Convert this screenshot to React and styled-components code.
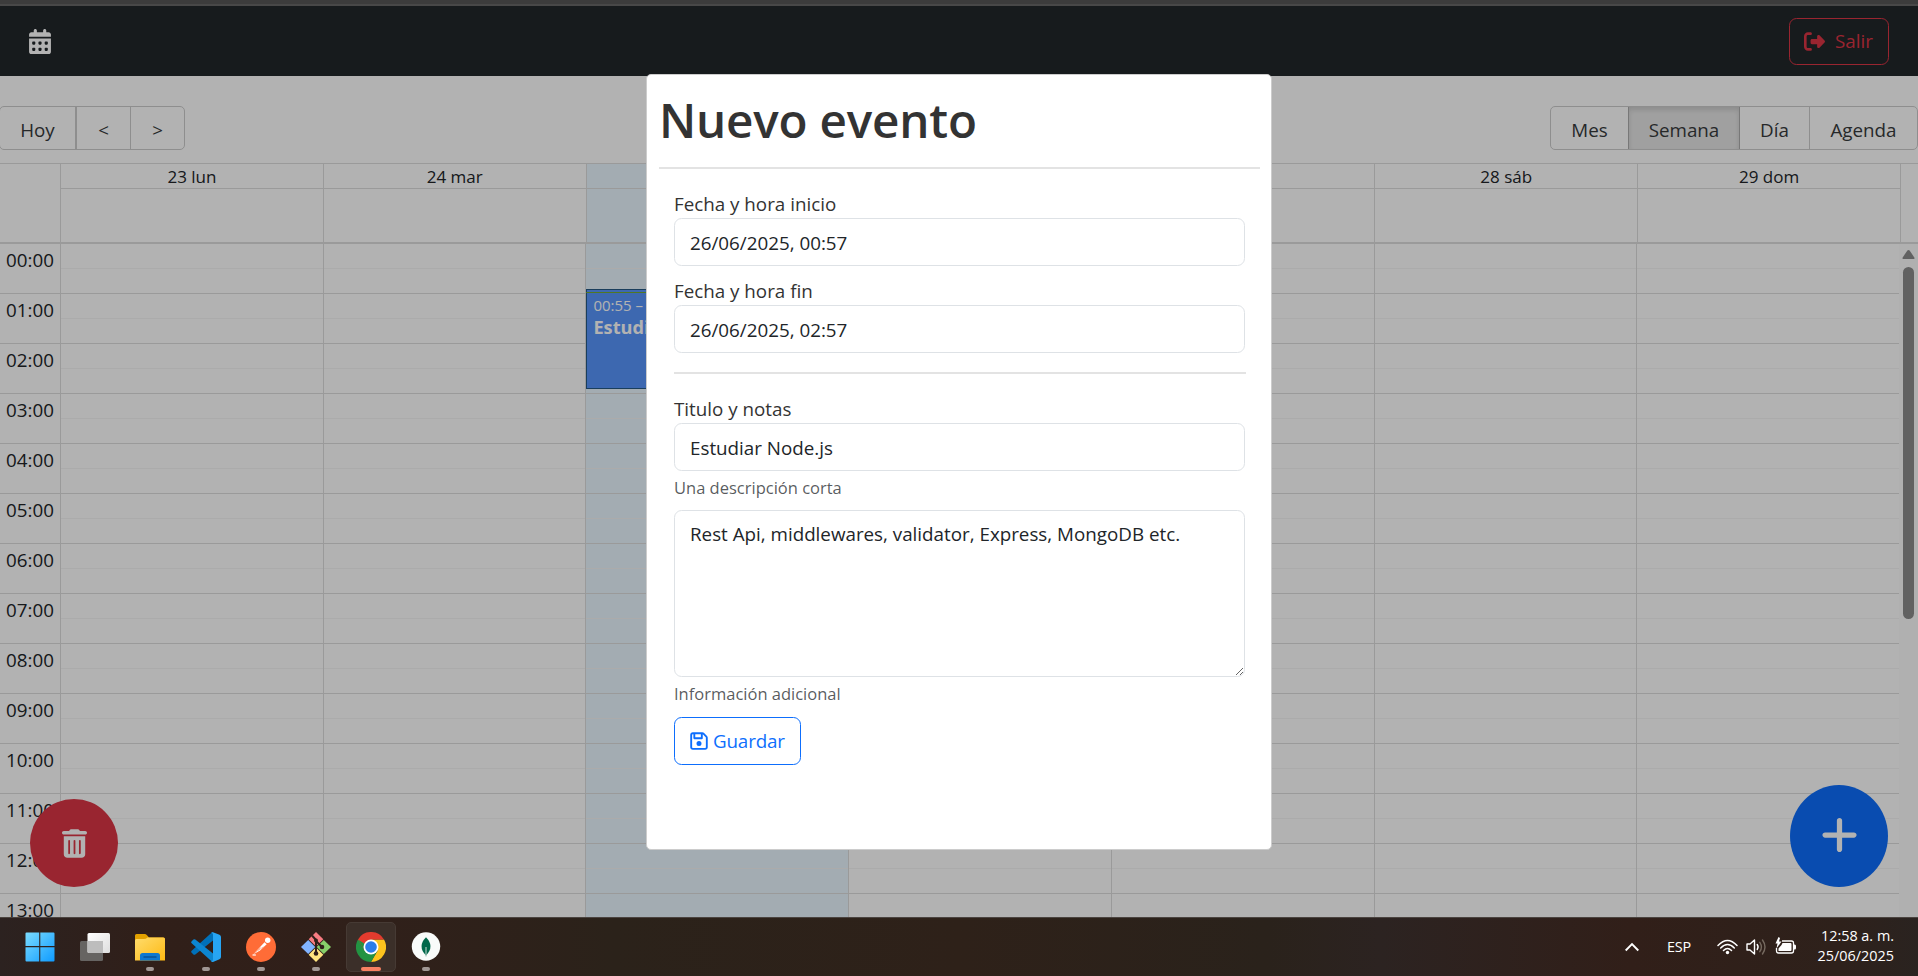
import React from 'react';
import styled, { createGlobalStyle, css } from 'styled-components';
import { FaCalendarDays, FaRightFromBracket, FaRegFloppyDisk, FaTrashCan, FaPlus } from 'react-icons/fa6';

const Global = createGlobalStyle`
  *, *::before, *::after { box-sizing: border-box; }
  html, body { margin: 0; padding: 0; overflow: hidden; }
  body {
    font-family: "Segoe UI", "Open Sans", "Noto Sans", sans-serif;
    font-size: 18.8px;
    line-height: 30px;
    color: #212529;
    background: #fff;
  }
  button, input, textarea { font: inherit; color: inherit; margin: 0; }
  h1 { margin: 0; }
`;

const Screen = styled.div`
  display: flex;
  flex-direction: column;
  width: 1918px;
  height: 976px;
  overflow: hidden;
`;

const BrowserEdge = styled.div`
  flex: none;
  height: 6px;
  background: #3c3c3c;
  border-bottom: 2px solid #484848;
`;

const Viewport = styled.div`
  position: relative;
  flex: none;
  height: 911px;
  overflow: hidden;
  display: flex;
  flex-direction: column;
  background: #fff;
`;

const Navbar = styled.nav`
  flex: none;
  display: flex;
  align-items: center;
  justify-content: space-between;
  height: 70px;
  padding: 0 29px;
  background: #21272a;
`;

const Brand = styled.span`
  display: flex;
  color: #fff;
  svg { width: 22px; height: 25px; }
`;

const LogoutButton = styled.button`
  display: flex;
  align-items: center;
  gap: 10px;
  width: 100px;
  height: 47px;
  padding: 0 0 0 14px;
  border: 1px solid #dc3545;
  border-radius: 7.5px;
  background: none;
  color: #dc3545;
  svg { width: 21px; height: 21px; }
`;

const Toolbar = styled.div`
  flex: none;
  display: flex;
  justify-content: space-between;
  padding: 30px 0 13px;
`;

const ButtonGroup = styled.div`
  display: flex;
  height: 44px;
  border: 1px solid #ccc;
  border-radius: 5px;
  overflow: hidden;
  margin-left: ${(p) => (p.$bleed ? -1 : 0)}px;
`;

const ToolButton = styled.button`
  width: ${(p) => p.$w}px;
  padding: 4px 0 0;
  border: 0;
  border-left: ${(p) => (p.$rule ? `${p.$rule}px solid #ccc` : '0')};
  background: none;
  color: #373a3c;
  line-height: 30px;
  ${(p) =>
    p.$active &&
    css`
      background: #e6e6e6;
      border: 1px solid #adadad;
      box-shadow: inset 0 3px 5px rgba(0, 0, 0, 0.125);
      padding-top: 3px;
      margin: -1px 0;
    `}
`;

const Calendar = styled.div`
  flex: 1;
  min-height: 0;
  display: flex;
  flex-direction: column;
  border-top: 1px solid #ddd;
`;

const HeaderRow = styled.div`
  flex: none;
  display: grid;
  grid-template-columns: 60px 1fr 17px;
  height: 80px;
  border-bottom: 2px solid #ddd;
`;

const HeaderDays = styled.div`
  display: grid;
  grid-template-columns: repeat(7, 1fr);
  border-right: 1px solid #ddd;
`;

const HeaderDay = styled.div`
  border-left: 1px solid #ddd;
  background: ${(p) => (p.$today ? '#eaf6ff' : 'transparent')};
  display: flex;
  flex-direction: column;
`;

const DayName = styled.div`
  height: 25px;
  border-bottom: 1px solid #ddd;
  text-align: center;
  font-size: 17px;
  line-height: 26px;
`;

const TimeGrid = styled.div`
  flex: 1;
  min-height: 0;
  display: grid;
  grid-template-columns: 60px 1fr 19px;
  overflow: hidden;
`;

const Gutter = styled.div`
  display: flex;
  flex-direction: column;
`;

const HourLabel = styled.div`
  flex: none;
  height: 50px;
  border-bottom: 1px solid #ddd;
  padding: 1px 6px 0 0;
  text-align: right;
`;

const Days = styled.div`
  display: grid;
  grid-template-columns: repeat(7, 1fr);
  min-width: 0;
`;

const DayColumn = styled.div`
  position: relative;
  border-left: 1px solid #ddd;
  background: ${(p) => (p.$today ? '#eaf6ff' : 'transparent')};
`;

const HourSlot = styled.div`
  height: 50px;
  border-bottom: 1px solid #ddd;
  &::before {
    content: '';
    display: block;
    height: 25px;
    border-bottom: 1px solid #f5f5f5;
  }
`;

const EventBlock = styled.div`
  position: absolute;
  top: 45px;
  left: 0;
  width: 236px;
  height: 100px;
  padding: 3px 6px;
  border: 1px solid #265985;
  background: #5895fc;
  color: #fff;
  white-space: nowrap;
`;

const EventTime = styled.div`
  font-size: 15px;
  line-height: 24px;
`;

const EventTitle = styled.strong`
  display: block;
  font-size: 18.2px;
  line-height: 21px;
`;

const NowLine = styled.div`
  position: absolute;
  top: 48px;
  left: 0;
  right: 0;
  height: 1px;
  background: #74ad31;
`;

const Scrollbar = styled.div`
  display: flex;
  flex-direction: column;
  align-items: center;
  padding: 6px 0 7px;
  background: #fcfcfc;
  color: #8b8b8b;
`;

const Thumb = styled.div`
  width: 11px;
  height: 352px;
  margin: 8px 0 auto;
  border-radius: 6px;
  background: #8b8b8b;
`;

const FloatingButton = styled.button`
  position: absolute;
  bottom: 30px;
  display: flex;
  align-items: center;
  justify-content: center;
  padding: 0;
  border: 0;
  border-radius: 50%;
  color: #fff;
`;

const DeleteButton = styled(FloatingButton)`
  left: 30px;
  width: 88px;
  height: 88px;
  background: #dc3545;
  svg { width: 25px; height: 29px; }
`;

const AddButton = styled(FloatingButton)`
  right: 30px;
  width: 98px;
  height: 102px;
  padding-bottom: 3px;
  background: #0d6efd;
  svg { width: 37px; height: 42px; }
`;

const Overlay = styled.div`
  position: absolute;
  inset: 0;
  background: rgba(0, 0, 0, 0.3);
`;

const Modal = styled.section`
  position: absolute;
  top: 68px;
  left: 646px;
  width: 626px;
  height: 776px;
  padding: 12px 11px 12px 12px;
  border: 1px solid #ccc;
  border-radius: 5px;
  background: #fff;
  color: #333;
`;

const Heading = styled.h1`
  height: 80px;
  font-size: 47.6px;
  line-height: 65px;
  font-weight: 600;
  letter-spacing: -0.2px;
`;

const Divider = styled.hr`
  height: 2px;
  margin: 0;
  border: 0;
  background: #e3e3e3;
`;

const Form = styled.form`
  display: flex;
  flex-direction: column;
  align-items: stretch;
  padding: 19px 14px 0 15px;
`;

const Field = styled.div`
  display: flex;
  flex-direction: column;
  padding-top: ${(p) => p.$before || 0}px;
  margin-bottom: ${(p) => p.$gap}px;
`;

const Label = styled.label`
  height: 30px;
  line-height: 32px;
`;

const control = css`
  display: block;
  width: 571px;
  border: 1px solid #dee2e6;
  border-radius: 7.5px;
  background: #fff;
  color: #212529;
  outline: 0;
`;

const Input = styled.input`
  ${control}
  height: 48px;
  padding: 1px 15px 0;
`;

const TextArea = styled.textarea`
  ${control}
  height: 167px;
  padding: 8px 15px;
  resize: vertical;
`;

const Hint = styled.small`
  margin-top: 3px;
  height: 27px;
  font-size: 16.5px;
  line-height: 27px;
  color: rgba(33, 37, 41, 0.75);
`;

const SaveButton = styled.button`
  display: flex;
  align-items: center;
  gap: 5px;
  width: 127px;
  height: 48px;
  padding: 0 0 0 15px;
  border: 1px solid #0d6efd;
  border-radius: 7.5px;
  background: none;
  color: #0d6efd;
  letter-spacing: -0.15px;
  svg { width: 18px; height: 20px; }
`;

const Taskbar = styled.footer`
  flex: none;
  display: flex;
  justify-content: space-between;
  height: 59px;
  padding: 0 24px 0 14px;
  border-top: 1px solid #4b4440;
  background: linear-gradient(90deg, #2c2220 0%, #301f19 8%, #30201a 20%, #2b221a 32%, #2e2119 50%, #2a221b 66%, #2c2321 72%, #311f19 85%, #2e211b 96%, #2a2320 100%);
  color: #fff;
`;

const Apps = styled.div`
  display: flex;
  gap: 5.2px;
  padding: 4px 0 0 1px;
`;

const AppTile = styled.div`
  display: flex;
  flex-direction: column;
  align-items: center;
  width: 50px;
  height: 50px;
  padding-top: 9px;
  border-radius: 5px;
  border: 1px solid ${(p) => (p.$active ? '#463a34' : 'transparent')};
  background: ${(p) => (p.$active ? '#3b2f29' : 'none')};
  svg { display: block; flex: none; }
`;

const RunMark = styled.i`
  width: ${(p) => (p.$active ? 20 : 8)}px;
  height: 4px;
  margin-top: 5px;
  border-radius: 2px;
  background: ${(p) => (p.$active ? '#f88162' : '#a09794')};
`;

const Tray = styled.div`
  display: flex;
  align-items: center;
  line-height: 20px;
`;

const Language = styled.span`
  margin: 0 23px 0 28px;
  width: 27px;
  font-size: 14.4px;
  letter-spacing: -0.2px;
`;

const TrayIcons = styled.div`
  display: flex;
  gap: 8px;
  flex: 0 0 84px;
`;

const Clock = styled.div`
  width: 93px;
  margin-top: -3px;
  text-align: right;
  font-size: 14.4px;
  white-space: nowrap;
`;

const WindowsIcon = () => (
  <svg width="30" height="30" viewBox="0 0 30 30">
    <defs>
      <linearGradient id="win" x1="0" y1="0" x2="1" y2="1" gradientUnits="objectBoundingBox">
        <stop offset="0" stopColor="#7bdcff" />
        <stop offset="1" stopColor="#0f9bff" />
      </linearGradient>
    </defs>
    <path fill="url(#win)" d="M1.5 .5H14.2V14H.5V1.5Q.5 .5 1.5 .5ZM15.3 .5H28.5Q29.5 .5 29.5 1.5V14H15.3ZM.5 15.2H14.2V29.5H1.5Q.5 29.5 .5 28.500ZM15.300 15.200H29.500V28.500Q29.500 29.500 28.500 29.500H15.300Z" />
  </svg>
);

const TaskViewIcon = () => (
  <svg width="30" height="30" viewBox="0 0 30 30">
    <defs>
      <linearGradient id="pane" x1="0" y1="0" x2="1" y2="1">
        <stop offset="0" stopColor="#fff" />
        <stop offset="1" stopColor="#dedede" />
      </linearGradient>
    </defs>
    <rect x="0" y="9" width="23" height="20" rx="1.500" fill="#666462" />
    <rect x="7.500" y="1" width="22.500" height="20" rx="1.500" fill="url(#pane)" />
    <path d="M7.500 9H23V21H9Q7.500 21 7.500 19.500Z" fill="#bdbdbd" />
  </svg>
);

const FolderIcon = () => (
  <svg width="30" height="30" viewBox="0 0 30 30">
    <defs>
      <linearGradient id="fold" x1="0" y1="0" x2="1" y2="1">
        <stop offset="0" stopColor="#ffdc6c" />
        <stop offset="1" stopColor="#fdb913" />
      </linearGradient>
    </defs>
    <path d="M0 3.500Q0 2 1.500 2H9.500Q11 2 12 3.200L14 5.500H28Q30 5.500 30 7.500V15H0Z" fill="#e2a100" />
    <path d="M0 8.500Q0 7 1.500 7H9Q11 7 12.500 5.500H28.500Q30 5.500 30 7V28.500H0Z" fill="url(#fold)" />
    <path d="M5 28.500V23.500Q5 21 7.500 21H22.500Q25 21 25 23.500V28.500Z" fill="#0f78d0" />
    <path d="M8.500 25H21.500" stroke="#064a8b" strokeWidth="1.200" />
  </svg>
);

const CodeIcon = () => (
  <svg width="30" height="30" viewBox="0 0 30 30">
    <path d="M22 .3V8.500L4.300 22.600Q3.300 23.200 2.400 22.400L.5 20.600Q-.3 19.600 .7 18.700L20.500 .8Z" fill="#0070b8" />
    <path d="M22 29.700V21.500L4.300 7.400Q3.300 6.800 2.400 7.600L.5 9.400Q-.3 10.400 .7 11.300L20.500 29.200Z" fill="#0c86d1" />
    <path d="M22 .2 28.500 2.800Q30 3.500 30 5V25Q30 26.500 28.500 27.200L22 29.900Q20.800 30 20 29 22 29.500 22 27.500V2.500Q22 .500 20 1 21 0 22 .2Z" fill="#27a5f3" />
  </svg>
);

const PostmanIcon = () => (
  <svg width="30" height="30" viewBox="0 0 30 30">
    <circle cx="15" cy="15" r="15" fill="#ff6c37" />
    <path d="M7.200 22.500 12 17.200 18.500 10.200 20.700 12.200 14 18.500Z" fill="#fff" />
    <path d="M7.500 22.500 14.500 15.500M12 18.500 17.500 14.800" stroke="#ff9e7d" strokeWidth=".7" />
    <circle cx="21.700" cy="8.300" r="2.700" fill="#fff" />
    <path d="M6.500 23H10" stroke="#fff" strokeWidth="1.200" />
  </svg>
);

const GitIcon = () => (
  <svg width="30" height="30" viewBox="0 0 30 30">
    <path d="M15 0 22.300 7.200 15 14.500 7.700 7.200Z" fill="#f87c82" />
    <path d="M7.200 8 14.300 15 7.200 22 0 15Z" fill="#80b3ff" />
    <path d="M22.800 8 30 15 22.800 22 15.700 15Z" fill="#87d06a" />
    <path d="M15 15.500 22.300 22.800 15 30 7.700 22.800Z" fill="#ffe680" />
    <path d="M11 3.500 15 8V22M15 9 21 15" stroke="#30201a" strokeWidth="2" fill="none" />
    <circle cx="15" cy="8.500" r="2" fill="#30201a" />
    <circle cx="21" cy="15" r="2.300" fill="#30201a" />
    <circle cx="15" cy="21.500" r="2.300" fill="#30201a" />
  </svg>
);

const ChromeIcon = () => (
  <svg width="30" height="30" viewBox="0 0 30 30">
    <path d="M15 7.500H28A15 15 0 0 1 15 30L21.500 18.750Z" fill="#fcc31e" />
    <path d="M2 7.500A15 15 0 0 0 15 30L21.500 18.750 15 15Z" fill="#229342" />
    <path d="M2 7.500A15 15 0 0 1 28 7.500H15L8.500 18.750Z" fill="#e33b2e" />
    <path d="M2 7.500 8.500 18.750 12 14Z" fill="#229342" />
    <circle cx="15" cy="15" r="7.500" fill="#fff" />
    <circle cx="15" cy="15" r="5.800" fill="#2b7de9" />
  </svg>
);

const MongoIcon = () => (
  <svg width="30" height="30" viewBox="0 0 30 30">
    <circle cx="15" cy="14.500" r="14.200" fill="#f9fbfa" />
    <path d="M15 5.300Q24 14.500 15 23.500 6 14.500 15 5.300Z" fill="#00684a" />
    <path d="M14.400 15H15.600V24.500H14.400Z" fill="#a9c9bc" />
  </svg>
);

const ChevronIcon = () => (
  <svg width="14" height="10" viewBox="0 0 14 10" fill="none" stroke="#fff" strokeWidth="1.900">
    <path d="M.7 8.500 7 2 13.300 8.500" />
  </svg>
);

const WifiIcon = () => (
  <svg width="21" height="20" viewBox="0 0 21 20" fill="none" stroke="#fff" strokeWidth="1.500" strokeLinecap="round">
    <path d="M1 8.500Q10.500-1.500 20 8.500M3.700 11Q10.500 4 17.300 11M6.500 13.500Q10.500 9.500 14.500 13.500" />
    <circle cx="10.500" cy="15.500" r="1.700" fill="#fff" stroke="none" />
  </svg>
);

const SpeakerIcon = () => (
  <svg width="21" height="20" viewBox="0 0 21 20" fill="none" stroke="#fff" strokeWidth="1.400" strokeLinejoin="round" strokeLinecap="round">
    <path d="M1 7H4L8.500 3V17L4 13H1Z" />
    <path d="M11.200 7.500Q13 10 11.200 12.500" />
    <path d="M13.800 5.300Q17 10 13.800 14.700M16.500 3Q21.500 10 16.500 17" stroke="#75695f" />
  </svg>
);

const BatteryIcon = () => (
  <svg width="22" height="20" viewBox="0 0 22 20">
    <path d="M7 4H16.500Q18.500 4 18.500 6V14Q18.500 16 16.500 16H3.500Q1.500 16 1.500 14V11" fill="none" stroke="#fff" strokeWidth="1.300" />
    <path d="M7.500 6H15.500Q16.500 6 16.500 7V13Q16.500 14 15.500 14H3.500V11.500L6.500 8Z" fill="#fff" />
    <path d="M19 7.500H19.700Q21 7.500 21 9V11Q21 12.500 19.700 12.500H19Z" fill="#fff" />
    <path d="M3.500 0 .5 6.500H2.500L1.500 11.500 6.500 4.500H4L5 1Z" fill="#fff" />
  </svg>
);

const ArrowIcon = ({ down }) => (
  <svg width="13" height="9" viewBox="0 0 13 9" fill="currentColor">
    {down ? (
      <path d="M1.200 0H11.800Q13 .3 12.300 1.600L7.600 8.400Q6.500 9.500 5.400 8.400L.7 1.600Q0 .3 1.200 0Z" />
    ) : (
      <path d="M1.200 9H11.800Q13 8.700 12.300 7.400L7.600 .6Q6.500-.5 5.400 .6L.7 7.400Q0 8.700 1.200 9Z" />
    )}
  </svg>
);

const TODAY = 2;
const days = [
  { id: 23, name: '23 lun' },
  { id: 24, name: '24 mar' },
  { id: 25 },
  { id: 26 },
  { id: 27 },
  { id: 28, name: '28 sáb' },
  { id: 29, name: '29 dom' },
];
const hours = Array.from({ length: 14 }, (_, h) => `${String(h).padStart(2, '0')}:00`);

const apps = [
  { id: 'start', Icon: WindowsIcon },
  { id: 'tasks', Icon: TaskViewIcon },
  { id: 'files', Icon: FolderIcon, running: true },
  { id: 'code', Icon: CodeIcon, running: true },
  { id: 'postman', Icon: PostmanIcon, running: true },
  { id: 'git', Icon: GitIcon, running: true },
  { id: 'chrome', Icon: ChromeIcon, running: true, active: true },
  { id: 'mongo', Icon: MongoIcon, running: true },
];

function WeekCalendar() {
  return (
    <Calendar>
      <HeaderRow>
        <div />
        <HeaderDays>
          {days.map((d, i) => (
            <HeaderDay key={d.id} $today={i === TODAY}>
              <DayName>{d.name}</DayName>
            </HeaderDay>
          ))}
        </HeaderDays>
        <div />
      </HeaderRow>
      <TimeGrid>
        <Gutter>
          {hours.map((h) => (
            <HourLabel key={h}>{h}</HourLabel>
          ))}
        </Gutter>
        <Days>
          {days.map((d, i) => (
            <DayColumn key={d.id} $today={i === TODAY}>
              {hours.map((h) => (
                <HourSlot key={h} />
              ))}
              {i === TODAY && (
                <>
                  <EventBlock>
                    <EventTime>00:55 –</EventTime>
                    <EventTitle>Estudiar</EventTitle>
                  </EventBlock>
                  <NowLine />
                </>
              )}
            </DayColumn>
          ))}
        </Days>
        <Scrollbar>
          <ArrowIcon />
          <Thumb />
          <ArrowIcon down />
        </Scrollbar>
      </TimeGrid>
    </Calendar>
  );
}

function EventModal() {
  return (
    <Modal>
      <Heading>Nuevo evento</Heading>
      <Divider />
      <Form>
        <Field $gap={9}>
          <Label>Fecha y hora inicio</Label>
          <Input defaultValue="26/06/2025, 00:57" />
        </Field>
        <Field $gap={19}>
          <Label>Fecha y hora fin</Label>
          <Input defaultValue="26/06/2025, 02:57" />
        </Field>
        <Divider />
        <Field $before={19} $gap={9}>
          <Label>Titulo y notas</Label>
          <Input defaultValue="Estudiar Node.js" />
          <Hint>Una descripción corta</Hint>
        </Field>
        <Field $gap={10}>
          <TextArea defaultValue="Rest Api, middlewares, validator, Express, MongoDB etc." />
          <Hint>Información adicional</Hint>
        </Field>
        <SaveButton type="button">
          <FaRegFloppyDisk />
          Guardar
        </SaveButton>
      </Form>
    </Modal>
  );
}

export default function App() {
  return (
    <>
      <Global />
      <Screen>
        <BrowserEdge />
        <Viewport>
          <Navbar>
            <Brand>
              <FaCalendarDays />
            </Brand>
            <LogoutButton>
              <FaRightFromBracket />
              Salir
            </LogoutButton>
          </Navbar>
          <Toolbar>
            <ButtonGroup $bleed>
              <ToolButton $w={75}>Hoy</ToolButton>
              <ToolButton $w={55} $rule={2}>&lt;</ToolButton>
              <ToolButton $w={54} $rule={1}>&gt;</ToolButton>
            </ButtonGroup>
            <ButtonGroup>
              <ToolButton $w={77}>Mes</ToolButton>
              <ToolButton $w={112} $active>Semana</ToolButton>
              <ToolButton $w={69}>Día</ToolButton>
              <ToolButton $w={108} $rule={1}>Agenda</ToolButton>
            </ButtonGroup>
          </Toolbar>
          <WeekCalendar />
          <DeleteButton>
            <FaTrashCan />
          </DeleteButton>
          <AddButton>
            <FaPlus />
          </AddButton>
          <Overlay />
          <EventModal />
        </Viewport>
        <Taskbar>
          <Apps>
            {apps.map(({ id, Icon, running, active }) => (
              <AppTile key={id} $active={active}>
                <Icon />
                {running && <RunMark $active={active} />}
              </AppTile>
            ))}
          </Apps>
          <Tray>
            <ChevronIcon />
            <Language>ESP</Language>
            <TrayIcons>
              <WifiIcon />
              <SpeakerIcon />
              <BatteryIcon />
            </TrayIcons>
            <Clock>
              12:58 a. m.
              <br />
              25/06/2025
            </Clock>
          </Tray>
        </Taskbar>
      </Screen>
    </>
  );
}
